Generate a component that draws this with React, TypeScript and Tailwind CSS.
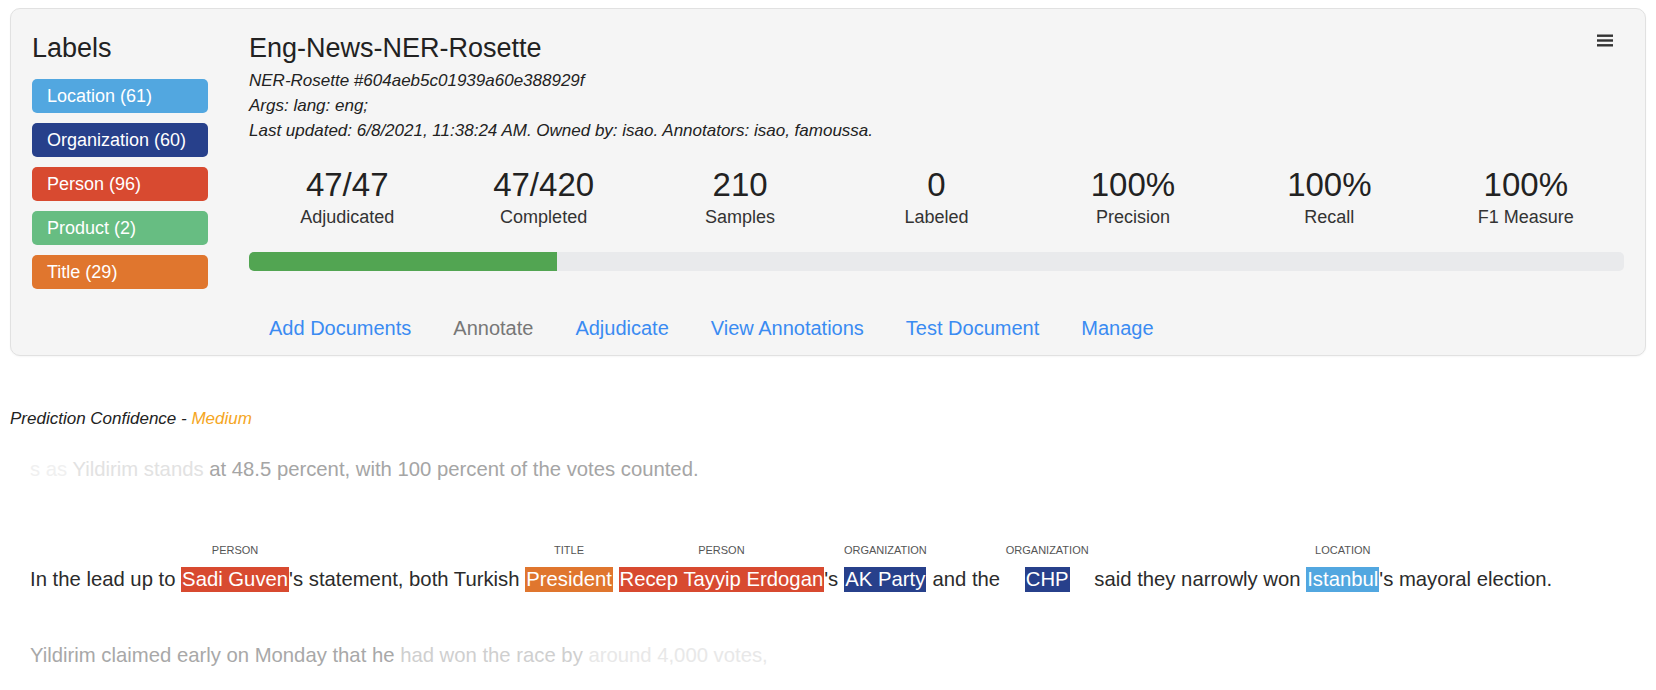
const labels = [
  { name: "Location", count: 61, color: "bg-[#52a7e0]" },
  { name: "Organization", count: 60, color: "bg-[#27408b]" },
  { name: "Person", count: 96, color: "bg-[#d84a30]" },
  { name: "Product", count: 2, color: "bg-[#67bd82]" },
  { name: "Title", count: 29, color: "bg-[#e0762e]" },
]

const stats = [
  { value: "47/47", label: "Adjudicated" },
  { value: "47/420", label: "Completed" },
  { value: "210", label: "Samples" },
  { value: "0", label: "Labeled" },
  { value: "100%", label: "Precision" },
  { value: "100%", label: "Recall" },
  { value: "100%", label: "F1 Measure" },
]

const links = [
  { text: "Add Documents", active: true },
  { text: "Annotate", active: false },
  { text: "Adjudicate", active: true },
  { text: "View Annotations", active: true },
  { text: "Test Document", active: true },
  { text: "Manage", active: true },
]

type Piece = { text: string; label?: string; color?: string }

const sentence: Piece[] = [
  { text: "In the lead up to " },
  { text: "Sadi Guven", label: "PERSON", color: "bg-[#d84a30]" },
  { text: "'s statement, both Turkish " },
  { text: "President", label: "TITLE", color: "bg-[#e0762e]" },
  { text: " " },
  { text: "Recep Tayyip Erdogan", label: "PERSON", color: "bg-[#d84a30]" },
  { text: "'s " },
  { text: "AK Party", label: "ORGANIZATION", color: "bg-[#27408b]" },
  { text: " and the " },
  { text: "CHP", label: "ORGANIZATION", color: "bg-[#27408b]" },
  { text: " said they narrowly won " },
  { text: "Istanbul", label: "LOCATION", color: "bg-[#52a7e0]" },
  { text: "'s mayoral election." },
]

const Hamburger = () => (
  <svg width="16" height="13" viewBox="0 0 16 13" className="text-[#333]">
    <rect x="0" y="0.5" width="16" height="2.4" fill="currentColor" />
    <rect x="0" y="5.3" width="16" height="2.4" fill="currentColor" />
    <rect x="0" y="10.1" width="16" height="2.4" fill="currentColor" />
  </svg>
)

const App = () => {
  return (
    <div className="min-h-[690px] bg-white pt-[8px] px-[10px] font-['Liberation_Sans',Arial,sans-serif] text-[#333]">
      {/* project card */}
      <div className="flex w-[1636px] rounded-[10px] border border-[#e1e1e1] bg-[#f5f5f5] pl-[21px] pr-[21px] pt-[23px] pb-[15px] shadow-[0_1px_2px_rgba(0,0,0,0.04)]">
        <div className="w-[176px] shrink-0">
          <div className="text-[27px] leading-[32px] text-[#222]">Labels</div>
          <div className="mt-[15px] flex flex-col gap-[10px]">
            {labels.map((l) => (
              <div
                key={l.name}
                className={`${l.color} h-[34px] rounded-[5px] pl-[15px] text-[18px] leading-[34px] text-white`}
              >
                {l.name} ({l.count})
              </div>
            ))}
          </div>
        </div>

        <div className="ml-[41px] flex-1">
          <div className="flex items-start justify-between">
            <div className="text-[27px] leading-[32px] text-[#222]">Eng-News-NER-Rosette</div>
            <div className="mt-[2px] mr-[11px]">
              <Hamburger />
            </div>
          </div>
          <div className="mt-[4px] text-[17px] italic leading-[25px] text-[#222]">
            <div>NER-Rosette #604aeb5c01939a60e388929f</div>
            <div>Args: lang: eng;</div>
            <div>Last updated: 6/8/2021, 11:38:24 AM. Owned by: isao. Annotators: isao, famoussa.</div>
          </div>

          <div className="mt-[23px] grid grid-cols-7">
            {stats.map((s) => (
              <div key={s.label} className="flex flex-col items-center">
                <div className="text-[33px] leading-[38px] text-[#222]">{s.value}</div>
                <div className="pt-[1px] text-[18px] leading-[24px] text-[#333]">{s.label}</div>
              </div>
            ))}
          </div>

          <div className="mt-[23px] h-[19px] w-full overflow-hidden rounded-[5px] bg-[#e9eaec]">
            <div className="h-full bg-[#52a552]" style={{ width: `${(47 / 210) * 100}%` }} />
          </div>

          <div className="-ml-[1px] mt-[45px] flex">
            {links.map((l) => (
              <span
                key={l.text}
                className={`px-[21px] text-[20px] leading-[24px] ${
                  l.active ? "text-[#3a8bf2]" : "text-[#777]"
                }`}
              >
                {l.text}
              </span>
            ))}
          </div>
        </div>
      </div>

      <div className="mt-[53px] text-[17px] italic leading-[20px] text-[#222]">
        Prediction Confidence - <span className="text-[#f5a623]">Medium</span>
      </div>

      <div className="mt-[28px] pl-[20px] text-[20.3px] leading-[25px] text-[#a5a5a5]">
        <span className="text-[#f0f0f0]">s as </span>
        <span className="text-[#e2e2e2]">Yildirim stands </span>
        <span>at 48.5 percent, with 100 percent of the votes counted.</span>
      </div>

      <div className="mt-[62px] flex items-end pl-[20px] text-[20.3px] leading-[25px] text-[#2b2b2b]">
        {sentence.map((p, i) =>
          p.label ? (
            <div key={i} className="flex flex-col items-center">
              <div className="mb-[10px] text-[11px] leading-[13px] text-[#555]">{p.label}</div>
              <span className={`${p.color} whitespace-pre px-px text-white`}>{p.text}</span>
            </div>
          ) : (
            <span key={i} className="whitespace-pre">
              {p.text}
            </span>
          )
        )}
      </div>

      <div className="mt-[51px] pl-[20px] text-[20.3px] leading-[25px]">
        <span className="text-[#a8a8a8]">Yildirim claimed early on Monday that he </span>
        <span className="text-[#cfcfcf]">had won the race by </span>
        <span className="text-[#e8e8e8]">around 4,000 votes,</span>
      </div>
    </div>
  )
}

export default App
